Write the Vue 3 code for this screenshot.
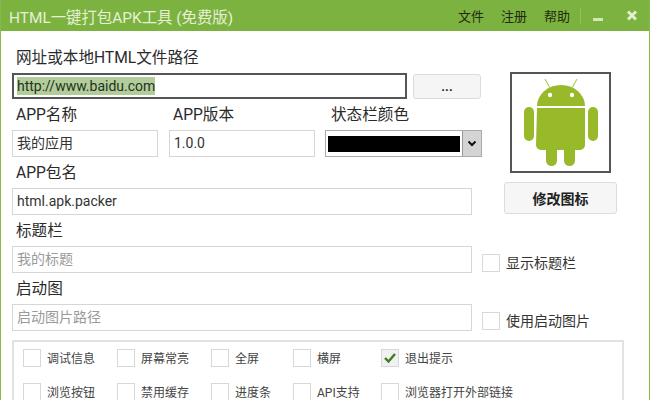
<script setup>
const optionRows = [
  [
    { label: '调试信息', w: 94 }, { label: '屏幕常亮', w: 94 }, { label: '全屏', w: 82 }, { label: '横屏', w: 88 }, { label: '退出提示', w: 220, checked: true },
  ],
  [
    { label: '浏览按钮', w: 94 }, { label: '禁用缓存', w: 94 }, { label: '进度条', w: 82 }, { label: 'API支持', w: 88 }, { label: '浏览器打开外部链接', w: 220 },
  ],
]
</script>

<template>
  <div class="window">
    <header class="titlebar">
      <span class="title">HTML一键打包APK工具 (免费版)</span>
      <nav class="menu">
        <span>文件</span><span>注册</span><span>帮助</span>
      </nav>
      <i class="sep"></i>
      <svg class="wbtn min" width="14" height="14" viewBox="0 0 14 14"><rect x="2" y="9" width="10" height="3" fill="#d5e6bb" /></svg>
      <svg class="wbtn close" width="14" height="14" viewBox="0 0 14 14"><path d="M3 2.500l8 8M11 2.500l-8 8" stroke="#e4efd2" stroke-width="3" /></svg>
    </header>

    <main class="content">
      <section class="top">
        <div class="left">
          <label class="lbl first">网址或本地HTML文件路径</label>
          <div class="url-row">
            <div class="field url"><span class="selected">http://www.baidu.com</span></div>
            <button class="btn dots">...</button>
          </div>
          <div class="triple">
            <div class="col c1">
              <label class="lbl">APP名称</label>
              <div class="field">我的应用</div>
            </div>
            <div class="col c2">
              <label class="lbl">APP版本</label>
              <div class="field">1.0.0</div>
            </div>
            <div class="col c3">
              <label class="lbl">状态栏颜色</label>
              <div class="select">
                <div class="swatch"></div>
                <div class="arrow">
                  <svg width="10" height="8" viewBox="0 0 10 8"><path d="M1.500 1.500L5 5l3.500-3.500" fill="none" stroke="#111" stroke-width="2" /></svg>
                </div>
              </div>
            </div>
          </div>
          <label class="lbl">APP包名</label>
          <div class="field wide">html.apk.packer</div>
        </div>
        <aside class="right">
          <div class="iconbox">
            <svg width="74" height="87" viewBox="0 0 74 87">
              <g fill="#97b92a">
                <path d="M13 27a24 21 0 0 1 48 0z" />
                <path d="M13 29h48v37a5 5 0 0 1-5 5h-5v10.500a5.500 5.500 0 0 1-11 0V71h-7v10.500a5.500 5.500 0 0 1-11 0V71h-5a5 5 0 0 1-5-5z" />
                <rect x="0" y="28" width="10" height="34" rx="5" />
                <rect x="64" y="28" width="10" height="34" rx="5" />
              </g>
              <path d="M26 9L21 0M48 9l5-9" stroke="#b4cc66" stroke-width="1.200" />
              <circle cx="26" cy="16" r="2.200" fill="#fff" />
              <circle cx="48" cy="16" r="2.200" fill="#fff" />
            </svg>
          </div>
          <button class="btn change">修改图标</button>
        </aside>
      </section>

      <label class="lbl">标题栏</label>
      <div class="with-check">
        <div class="field wide placeholder">我的标题</div>
        <span class="box"></span>
        <span class="check-text">显示标题栏</span>
      </div>

      <label class="lbl">启动图</label>
      <div class="with-check">
        <div class="field wide placeholder">启动图片路径</div>
        <span class="box"></span>
        <span class="check-text">使用启动图片</span>
      </div>

      <section class="options">
        <div v-for="(row, r) in optionRows" :key="r" class="opt-row">
          <div v-for="o in row" :key="o.label" class="opt" :style="{ width: o.w + 'px' }">
            <span class="box small" :class="{ on: o.checked }">
              <svg v-if="o.checked" width="14" height="12" viewBox="0 0 14 12"><path d="M2 6l3.500 3.500L12 2" fill="none" stroke="#3f7d20" stroke-width="2.400" /></svg>
            </span>
            <span class="opt-text">{{ o.label }}</span>
          </div>
        </div>
      </section>
    </main>
  </div>
</template>

<style scoped>
.window {
  width: 650px;
  height: 400px;
  overflow: hidden;
  box-sizing: border-box;
  background: #fff;
  border-left: 1px solid #8bb84c;
  border-right: 1px solid #8bb84c;
  font-family: Roboto, "Noto Sans CJK SC", sans-serif;
  color: #222;
}
.titlebar {
  height: 31px;
  margin: 0 -1px;
  background: #7cb23f;
  display: flex;
  align-items: center;
  padding-left: 9px;
}
.title {
  font-size: 15.400px;
  color: #e6f0d6;
  flex: 1;
  white-space: nowrap;
}
.menu {
  display: flex;
  gap: 17px;
  font-size: 13px;
  color: #1f2a12;
}
.sep {
  width: 1px;
  height: 16px;
  background: #92c05a;
  margin: 0 10px 0 10px;
}
.wbtn { flex: none; }
.wbtn.min { margin-right: 20px; }
.wbtn.close { margin-right: 11px; }
.content {
  padding: 0 0 0 11px;
}
.top {
  display: flex;
}
.left {
  width: 470px;
}
.right {
  margin-left: 22px;
  padding-top: 41px;
  display: flex;
  flex-direction: column;
  align-items: center;
  width: 113px;
}
.lbl {
  display: block;
  box-sizing: border-box;
  font-size: 15.600px;
  line-height: 19px;
  height: 20px;
  padding-top: 1px;
  margin: 6px 0 5px 4px;
  color: #2a2a2a;
  white-space: nowrap;
}
.lbl.first {
  margin-top: 17px;
}
.url-row {
  display: flex;
  gap: 6px;
  margin-bottom: 6px;
}
.field {
  box-sizing: border-box;
  height: 27px;
  border: 1px solid #d6d6d6;
  font-size: 14px;
  line-height: 25px;
  padding-left: 4px;
  color: #333;
  white-space: nowrap;
}
.field.wide { width: 460px; }
.field.url {
  width: 395px;
  height: 26px;
  border: 2px solid #555;
  padding-left: 3px;
  line-height: 18px;
}
.selected {
  display: inline-block;
  margin-top: 2px;
  background: #b3cc9c;
  color: #23331a;
}
.btn {
  box-sizing: border-box;
  border: 1px solid #dcdcdc;
  border-radius: 3px;
  background: #f5f5f5;
  font-family: inherit;
  color: #222;
  padding: 0;
}
.dots { width: 68px; height: 25px; margin-top: 1px; font-size: 13px; font-weight: 700; }
.triple { display: flex; }
.col .lbl { margin-top: 0; }
.c1 { width: 146px; }
.c2 { width: 146px; margin-left: 11px; }
.c3 { width: 157px; margin-left: 10px; }
.c3 .lbl { margin-left: 6px; }
.select {
  box-sizing: border-box;
  height: 27px;
  border: 1px solid #aaa;
  display: flex;
  align-items: center;
  padding-left: 2px;
}
.swatch { flex: 1; height: 16px; background: #000; margin-right: 2px; }
.arrow {
  box-sizing: border-box;
  width: 19px;
  height: 25px;
  background: #d4d4d4;
  border-left: 1px solid #999;
  display: flex;
  align-items: center;
  justify-content: center;
}
.iconbox {
  box-sizing: border-box;
  width: 101px;
  height: 101px;
  border: 2px solid #555;
  display: flex;
  align-items: center;
  justify-content: center;
  flex: none;
}
.change {
  width: 113px;
  height: 32px;
  margin-top: 9px;
  font-size: 14px;
  font-weight: 700;
  background: #f6f6f6;
}
.with-check {
  display: flex;
  align-items: flex-end;
  height: 27px;
}
.placeholder { color: #9a9a9a; }
.box {
  box-sizing: border-box;
  width: 18px;
  height: 18px;
  border: 1px solid #d8d8d8;
  margin: 0 0 1px 10px;
  flex: none;
  display: flex;
  align-items: center;
  justify-content: center;
}
.check-text {
  font-size: 14px;
  line-height: 18px;
  margin: 0 0 1px 6px;
  color: #333;
  white-space: nowrap;
}
.options {
  box-sizing: border-box;
  width: 612px;
  height: 60px;
  margin-top: 9px;
  border: 2px solid #e2e2e2;
  border-bottom: 0;
  padding: 7px 0 0 9px;
}
.opt-row {
  display: flex;
  height: 34px;
}
.opt {
  display: flex;
  align-items: flex-start;
  flex: none;
}
.box.small {
  margin: 0 6px 0 0;
}
.box.on { background: #f1f1f1; }
.opt-text {
  font-size: 12px;
  line-height: 20px;
  color: #444;
  white-space: nowrap;
}
</style>

<style>
html, body { margin: 0; background: #fff; }
</style>
